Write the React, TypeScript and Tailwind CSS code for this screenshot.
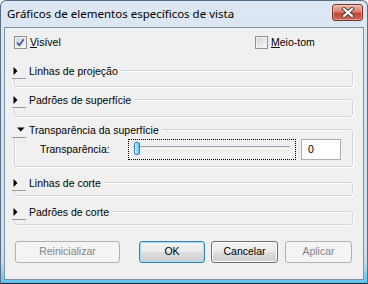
import React from "react";

function Arrow({ open }: { open?: boolean }) {
  if (open) {
    return (
      <svg width="8" height="5" viewBox="0 0 8 5" className="ml-[5px]">
        <path d="M0 0.5 L7.5 0.5 L3.75 4.5 Z" fill="#000" />
      </svg>
    );
  }
  return (
    <svg width="5" height="8" viewBox="0 0 5 8" className="ml-[1px]">
      <path d="M0.5 0 L4.5 4 L0.5 8 Z" fill="#000" />
    </svg>
  );
}

function Group({
  title,
  open,
  className,
  children,
}: {
  title: string;
  open?: boolean;
  className: string;
  children?: React.ReactNode;
}) {
  return (
    <div
      className={`relative rounded-[3px] border border-[#d0d5d9] shadow-[inset_1px_1px_0_#fff,1px_1px_0_#fff] ${className}`}
    >
      <div className="absolute left-[-3px] top-[-8px] flex h-[16px] items-center bg-[#f0f0f0] pr-[3px]">
        <span className="flex h-[16px] w-[14px] items-center border-b border-[#9a9a9a]">
          <Arrow open={open} />
        </span>
        <span className="ml-[3px] leading-none">{title}</span>
      </div>
      {children}
    </div>
  );
}

function CheckBox({ checked }: { checked?: boolean }) {
  return (
    <span className="flex h-[13px] w-[13px] items-center justify-center border border-[#8e8f8f] bg-[#f4f4f4]">
      <span className="flex h-[9px] w-[9px] items-center justify-center bg-[linear-gradient(135deg,#cfd3d8,#f7f7f7)]">
        {checked && (
          <svg width="9" height="9" viewBox="0 0 9 9">
            <path d="M1.2 4.6 L3.4 7.2 L7.8 1.2" fill="none" stroke="#3b55a0" strokeWidth="1.7" />
          </svg>
        )}
      </span>
    </span>
  );
}

const btnGrad =
  "bg-[linear-gradient(#f2f2f2_0%,#ebebeb_48%,#dddddd_52%,#cfcfcf_100%)]";

export default function App() {
  return (
    <div className="flex h-[284px] w-[368px] flex-col rounded-t-[6px] border border-[#5b6f84] border-b-[#1e2a36] bg-[linear-gradient(#dde7f3,#cfdeee_92%,#5cc0ee)] font-['Liberation_Sans',sans-serif] text-[10.5px] text-black">
      {/* Title bar */}
      <div className="flex h-[26px] items-start justify-between">
        <span className="mt-[6px] pl-[6px] font-['Noto_Sans',sans-serif] text-[11.5px] leading-[14px] text-black">
          Gráficos de elementos específicos de vista
        </span>
        <button className="mr-[4px] mt-[3px] flex h-[17px] w-[31px] items-center justify-center rounded-[3px] border border-[#7a3329] bg-[linear-gradient(#eab3a7,#d9836f_45%,#c5442f_55%,#cf6a55)] shadow-[inset_0_0_0_1px_rgba(255,255,255,0.35)]">
          <svg width="14" height="11" viewBox="0 0 14 11">
            <path d="M3 2 L11 9 M11 2 L3 9" stroke="#4a4a4a" strokeWidth="4" strokeLinecap="square" />
            <path d="M3 2 L11 9 M11 2 L3 9" stroke="#fff" strokeWidth="2" strokeLinecap="square" />
          </svg>
        </button>
      </div>

      {/* Client area */}
      <div className="mx-[3px] mb-[3px] flex-1 border border-[#7f91a5] bg-[#f0f0f0] pl-[9px] pr-[10px] pt-[8px]">
        <div className="flex h-[13px] items-center">
          <div className="flex w-[241px] items-center">
            <CheckBox checked />
            <span className="ml-[3px]">
              <span className="underline">V</span>isível
            </span>
          </div>
          <div className="flex items-center">
            <CheckBox />
            <span className="ml-[3px]">
              <span className="underline">M</span>eio-tom
            </span>
          </div>
        </div>

        <Group title="Linhas de projeção" className="mt-[21px] h-[17px]" />
        <Group title="Padrões de superfície" className="mt-[12px] h-[18px]" />
        <Group
          title="Transparência da superfície"
          open
          className="mt-[12px] h-[38px] pl-[25px] pt-[9px]"
        >
          <div className="flex items-center">
            <span className="w-[88px]">Transparência:</span>
            <div className="relative h-[21px] w-[168px] border border-dotted border-black">
              <span className="absolute left-[4px] right-[5px] top-[6px] h-[3px] border-t border-[#9da4ab] border-b border-b-white bg-[#e3e6e8]" />
              <span className="absolute left-[5px] top-[2px] h-[13px] w-[6px] rounded-[2px] border border-[#3c7fb1] bg-[linear-gradient(90deg,#dff3fc,#8fd8f7_50%,#5cc0ee)]" />
            </div>
            <div className="ml-[5px] flex h-[21px] w-[40px] items-center border border-[#abadb3] bg-white pl-[6px]">
              0
            </div>
          </div>
        </Group>
        <Group title="Linhas de corte" className="mt-[15px] h-[14px]" />
        <Group title="Padrões de corte" className="mt-[15px] h-[14px]" />

        <div className="mt-[16px] flex h-[22px]">
          <button className="ml-[1px] h-[22px] w-[105px] rounded-[3px] border border-[#adb2b5] bg-[#f4f4f4] text-[#838383]">
            Reinicializar
          </button>
          <button
            className={`ml-[19px] h-[22px] w-[66px] rounded-[3px] border border-[#3c7fb1] ${btnGrad} shadow-[inset_0_0_0_1px_#9fe0f8]`}
          >
            OK
          </button>
          <button
            className={`ml-[6px] h-[22px] w-[67px] rounded-[3px] border border-[#707070] ${btnGrad} shadow-[inset_0_0_0_1px_#fbfbfb]`}
          >
            Cancelar
          </button>
          <button className="ml-[7px] h-[22px] w-[67px] rounded-[3px] border border-[#adb2b5] bg-[#f4f4f4] text-[#838383]">
            Aplicar
          </button>
        </div>
      </div>
    </div>
  );
}
